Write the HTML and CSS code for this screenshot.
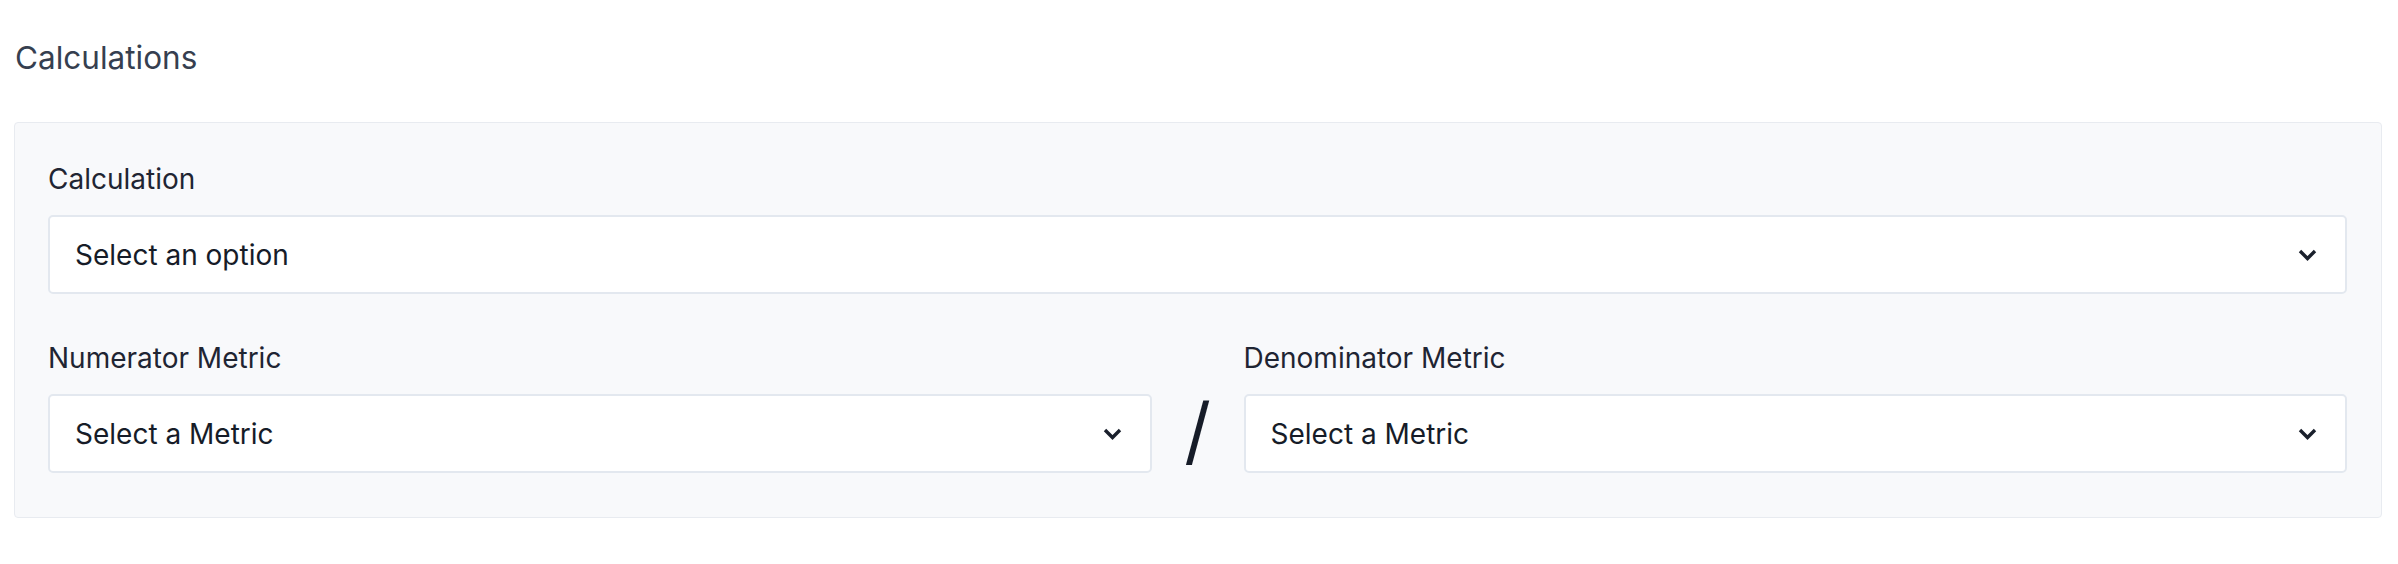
FILE: index.html
```html
<!DOCTYPE html>
<html lang="en">
<head>
<meta charset="utf-8">
<title>Calculations</title>
<link rel="stylesheet" href="styles.css">
</head>
<body>
<div class="page">
  <h2 class="title">Calculations</h2>
  <section class="panel">
    <div class="field field-wide">
      <label class="label">Calculation</label>
      <div class="select">
        <span class="select-text">Select an option</span>
        <svg class="chev" width="19" height="12" viewBox="0 0 19 12"><polyline points="2,2 9.5,9.5 17,2" fill="none" stroke="#1a202c" stroke-width="3.4" stroke-linejoin="miter"/></svg>
      </div>
    </div>
    <div class="ratio">
      <div class="field">
        <label class="label">Numerator Metric</label>
        <div class="select">
          <span class="select-text">Select a Metric</span>
          <svg class="chev" width="19" height="12" viewBox="0 0 19 12"><polyline points="2,2 9.5,9.5 17,2" fill="none" stroke="#1a202c" stroke-width="3.4" stroke-linejoin="miter"/></svg>
        </div>
      </div>
      <div class="divider"><span class="slash">/</span></div>
      <div class="field">
        <label class="label">Denominator Metric</label>
        <div class="select">
          <span class="select-text">Select a Metric</span>
          <svg class="chev" width="19" height="12" viewBox="0 0 19 12"><polyline points="2,2 9.5,9.5 17,2" fill="none" stroke="#1a202c" stroke-width="3.4" stroke-linejoin="miter"/></svg>
        </div>
      </div>
    </div>
  </section>
</div>
</body>
</html>
```

FILE: styles.css
```css
* { box-sizing: border-box; }
html, body { margin: 0; padding: 0; background: #ffffff; }
body { font-family: Inter, "Noto Sans", "Liberation Sans", sans-serif; }

.page {
  padding: 35px 16px 0 14px;
}

.title {
  margin: 0 0 42px 1px;
  font-size: 31.5px;
  line-height: 45px;
  font-weight: 400;
  color: #363f50;
}

.panel {
  background: #f8f9fb;
  border: 1px solid #e8ebf0;
  border-radius: 4px;
  padding: 36px 34px 44px 33px;
}

.field { display: flex; flex-direction: column; }
.field-wide { margin-bottom: 44px; }

.label {
  font-size: 28px;
  line-height: 41px;
  color: #1f2533;
  margin-bottom: 15px;
}

.select {
  height: 79px;
  background: #ffffff;
  border: 2px solid #e3e8ef;
  border-radius: 5px;
  display: flex;
  align-items: center;
  justify-content: space-between;
  padding: 0 28px 0 25px;
}

.select-text {
  font-size: 28px;
  color: #161c28;
}

.chev { display: block; flex-shrink: 0; }

.ratio {
  display: grid;
  grid-template-columns: 1fr 92px 1fr;
}

.divider {
  align-self: end;
  height: 79px;
  display: flex;
  align-items: center;
  justify-content: center;
}

.slash {
  font-size: 74px;
  line-height: 1;
  color: #161c28;
  transform: translateY(-4px);
}
```
